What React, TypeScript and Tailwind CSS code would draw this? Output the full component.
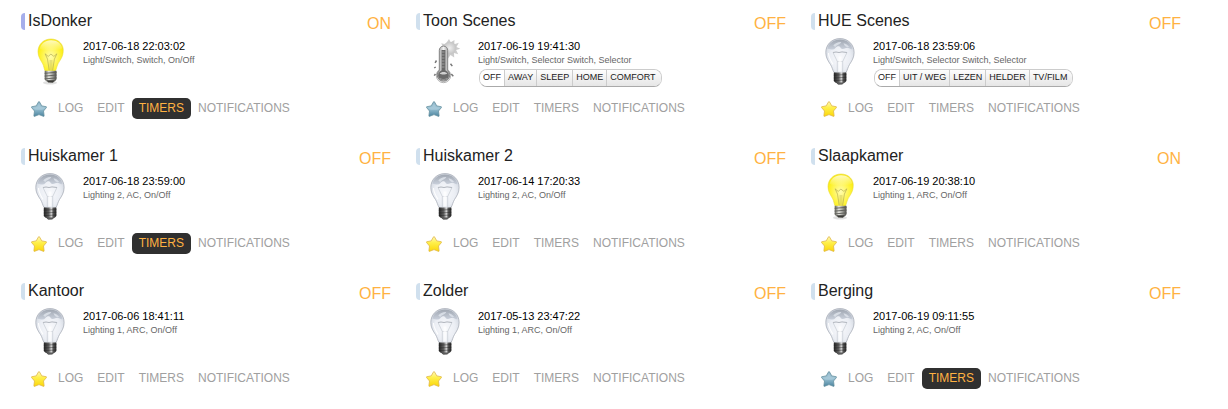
type IconKind = "on" | "off" | "thermometer";

interface Device {
  name: string;
  status: "ON" | "OFF";
  icon: IconKind;
  updated: string;
  type: string;
  favorite: boolean;
  hasTimers: boolean;
  highlighted?: boolean;
  levels?: string[];
}

const devices: Device[] = [
  { name: "IsDonker", status: "ON", icon: "on", updated: "2017-06-18 22:03:02", type: "Light/Switch, Switch, On/Off", favorite: false, hasTimers: true, highlighted: true },
  { name: "Toon Scenes", status: "OFF", icon: "thermometer", updated: "2017-06-19 19:41:30", type: "Light/Switch, Selector Switch, Selector", favorite: false, hasTimers: false, levels: ["OFF", "AWAY", "SLEEP", "HOME", "COMFORT"] },
  { name: "HUE Scenes", status: "OFF", icon: "off", updated: "2017-06-18 23:59:06", type: "Light/Switch, Selector Switch, Selector", favorite: true, hasTimers: false, levels: ["OFF", "UIT / WEG", "LEZEN", "HELDER", "TV/FILM"] },
  { name: "Huiskamer 1", status: "OFF", icon: "off", updated: "2017-06-18 23:59:00", type: "Lighting 2, AC, On/Off", favorite: true, hasTimers: true },
  { name: "Huiskamer 2", status: "OFF", icon: "off", updated: "2017-06-14 17:20:33", type: "Lighting 2, AC, On/Off", favorite: true, hasTimers: false },
  { name: "Slaapkamer", status: "ON", icon: "on", updated: "2017-06-19 20:38:10", type: "Lighting 1, ARC, On/Off", favorite: true, hasTimers: false },
  { name: "Kantoor", status: "OFF", icon: "off", updated: "2017-06-06 18:41:11", type: "Lighting 1, ARC, On/Off", favorite: true, hasTimers: false },
  { name: "Zolder", status: "OFF", icon: "off", updated: "2017-05-13 23:47:22", type: "Lighting 1, ARC, On/Off", favorite: true, hasTimers: false },
  { name: "Berging", status: "OFF", icon: "off", updated: "2017-06-19 09:11:55", type: "Lighting 2, AC, On/Off", favorite: false, hasTimers: true },
];

function IconDefs() {
  return (
    <svg className="absolute size-0" aria-hidden="true">
      <defs>
        <radialGradient id="glassOn" cx="0.5" cy="0.55" r="0.6">
          <stop offset="0" stopColor="#fffcae" />
          <stop offset="0.45" stopColor="#fff65c" />
          <stop offset="0.8" stopColor="#fdf01c" />
          <stop offset="1" stopColor="#f3df10" />
        </radialGradient>
        <linearGradient id="shineOn" x1="0" y1="0" x2="0" y2="1">
          <stop offset="0" stopColor="#fff" stopOpacity="0.75" />
          <stop offset="1" stopColor="#fff" stopOpacity="0" />
        </linearGradient>
        <linearGradient id="baseOn" x1="0" y1="0" x2="1" y2="0">
          <stop offset="0" stopColor="#5c5c54" />
          <stop offset="0.35" stopColor="#e8e8e2" />
          <stop offset="0.65" stopColor="#a0a09a" />
          <stop offset="1" stopColor="#4c4c48" />
        </linearGradient>
        <radialGradient id="glassOff" cx="0.5" cy="0.55" r="0.6">
          <stop offset="0" stopColor="#f8f9fc" />
          <stop offset="0.6" stopColor="#ebeef4" />
          <stop offset="0.88" stopColor="#d8dde5" />
          <stop offset="1" stopColor="#b4bac4" />
        </radialGradient>
        <linearGradient id="capOff" x1="0" y1="0" x2="0" y2="1">
          <stop offset="0" stopColor="#9aa1ac" />
          <stop offset="1" stopColor="#c6cdd9" />
        </linearGradient>
        <linearGradient id="baseOff" x1="0" y1="0" x2="1" y2="0">
          <stop offset="0" stopColor="#242424" />
          <stop offset="0.4" stopColor="#646464" />
          <stop offset="0.6" stopColor="#d8d8d8" />
          <stop offset="0.75" stopColor="#585858" />
          <stop offset="1" stopColor="#262626" />
        </linearGradient>
        <linearGradient id="tube" x1="0" y1="0" x2="1" y2="0">
          <stop offset="0" stopColor="#8a8a8a" />
          <stop offset="0.5" stopColor="#f2f2f2" />
          <stop offset="1" stopColor="#8a8a8a" />
        </linearGradient>
        <radialGradient id="sun">
          <stop offset="0" stopColor="#eeeeee" />
          <stop offset="1" stopColor="#c4c4c4" />
        </radialGradient>
        <linearGradient id="starGold" x1="0" y1="0" x2="0" y2="1">
          <stop offset="0" stopColor="#fff9c0" />
          <stop offset="0.4" stopColor="#fff04c" />
          <stop offset="1" stopColor="#fbd608" />
        </linearGradient>
        <linearGradient id="starBlue" x1="0" y1="0" x2="0" y2="1">
          <stop offset="0" stopColor="#8fb4c8" />
          <stop offset="0.45" stopColor="#9cc3d4" />
          <stop offset="1" stopColor="#4a839f" />
        </linearGradient>
      </defs>
    </svg>
  );
}

function BulbOn() {
  return (
    <svg viewBox="0 0 48 48" className="size-12">
      <ellipse cx="24" cy="44.8" rx="7" ry="1.8" fill="#000" opacity="0.12" />
      <path d="M25 1C17.500 1 12 6.500 12 13.600c0 5.300 2.800 8.600 4.700 12.200 1.200 2.400 1.300 4.700 2.100 6.500.4.900 1.300 1.200 2.200 1.200h6.600c1 0 1.800-.4 2.200-1.300.8-1.900 1-4 2.200-6.400 1.900-3.600 5.200-7 5.200-12.200C38 6.500 32.500 1 25 1z" fill="url(#glassOn)" stroke="#eadb3a" strokeWidth="0.6" />
      <path d="M25 2.200c-6 0-10.500 3.600-11.200 8.700 6 2.300 16.500 2.300 22.500-.4C35.500 5.600 31 2.200 25 2.200z" fill="url(#shineOn)" />
      <path d="M23.200 32.500l-1.700-11.400-2.400-5.300M26.600 32.500l1.800-11.400 2.500-5.300M19.100 15.800l3.100 2.600 2.700-2.300 3 2.300 3-2.600" fill="none" stroke="#b5ae55" strokeWidth="0.7" />
      <path d="M23.500 22h3v10.500h-3z" fill="#d0c865" opacity="0.5" />
      <path d="M18.700 32.800h11.800v8.200c0 1.100-1.600 2.500-3 3.300-.8 1.200-4.800 1.200-5.700 0-1.400-.8-3.100-2.200-3.100-3.300z" fill="url(#baseOn)" />
      <path d="M18.600 35.300l12-1M18.600 38.100l12-1M18.600 40.900l12-1" stroke="#5c5c58" strokeWidth="0.9" />
      <path d="M20.300 42.300h8.600l-2 2.300h-4.600z" fill="#3b3b38" />
    </svg>
  );
}

function BulbOff() {
  return (
    <svg viewBox="0 0 48 48" className="size-12">
      <path d="M24 .6C15.500.6 9.800 6.900 9.800 14.500c0 5.200 2.400 8.500 4.800 12.200 1.700 2.700 2.100 5.700 3.300 7.400.6.900 1.600 1.400 2.700 1.400h7c1.100 0 2-.5 2.600-1.400 1.100-1.700 1.600-4.700 3.200-7.400 2.300-3.700 4.700-7 4.700-12.200C38.100 6.900 32.500.6 24 .6z" fill="url(#glassOff)" stroke="#a9afb9" strokeWidth="0.8" />
      <path d="M24 1.500c-6.600 0-11.400 4-12.700 9.300 2.700-.2 3.900 1.500 6.600.5 1.800-.8 2.100-3.300 5-3.100 1.600.1 1.300 2.600 3.500 2.700 2.800.1 3.700-1.700 6.200-1 1.900.5 2.900 1.900 4.100 1.300C35.600 5.600 30.600 1.500 24 1.500z" fill="url(#capOff)" opacity="0.9" />
      <path d="M17.300 7.600c1.800-2.600 5-3.900 8-3.600-.8 2.500-4.500 2.700-6 5zM27.500 5.200c2.300.2 4.500 1.800 5.600 3.800-2.300.3-4.800-.6-5.600-3.800z" fill="#e0e5ec" opacity="0.8" />
      <path d="M17 14.500l3-.5 3 .5 3-.6 5 .6" fill="none" stroke="#a0a5ad" strokeWidth="0.8" />
      <path d="M17 14.500l4.300 9v10.500M31 14.500l-4.300 9v10.500M21.300 23.500h5.400" fill="none" stroke="#c6cbd3" strokeWidth="0.7" />
      <path d="M22.500 18.500h3v15h-3z" fill="#fff" opacity="0.7" />
      <path d="M12.500 15c0 4.600 2.600 8 4.500 11.400" fill="none" stroke="#fff" strokeWidth="1.2" opacity="0.9" />
      <path d="M17.800 34.500h12.600v8c0 1.100-1.500 2.200-2.600 2.600-1 2-6.200 2-7.300 0-1.100-.4-2.700-1.500-2.700-2.600z" fill="url(#baseOff)" />
      <path d="M17.700 37.200l12.700-.7M17.700 40l12.700-.7M17.700 42.700l12.700-.7" stroke="#1e1e1e" strokeWidth="0.6" opacity="0.7" />
      <path d="M20.500 44.500h7.200l-1.500 2.100h-4.100z" fill="#5a5a5a" />
    </svg>
  );
}

function Thermometer() {
  return (
    <svg viewBox="0 0 48 48" className="size-12">
      <path d="M28 1l1.700 3.200L33.500 2l-.3 4.200 4.600-1.400-2.300 4.100 3.800 1.800-4.200 1.400 2.100 4.100-4.200-1.100.2 4.300-3.700-2.500-2.500 3.600-1.500-4.400-4 1.500 1.200-4.500-4.500-1.500 4-2.100-2-4.300 4.200 1z" fill="#cccccc" />
      <circle cx="28.7" cy="10" r="6.300" fill="url(#sun)" />
      <circle cx="22.5" cy="37.5" r="7.200" fill="#ececec" stroke="#999" strokeWidth="0.7" />
      <path d="M18.300 32.200V12.300a4.200 4.200 0 0 1 8.400 0v19.900a6.300 6.300 0 1 1-8.400 0z" fill="url(#tube)" stroke="#858585" strokeWidth="1" />
      <path d="M20.500 12h4v22h-4z" fill="#686868" />
      <path d="M20.500 14h3M20.500 17h3M20.500 20h3M20.500 23h3M20.500 26h3M20.500 29h3" stroke="#b5b5b5" strokeWidth="0.7" />
      <circle cx="22.5" cy="37.3" r="5.200" fill="#6a6a6a" />
      <path d="M18.700 35.700c1.200-2.200 6.400-2.300 7.600 0-1.700 1.100-5.900 1.100-7.600 0z" fill="#d0d0d0" />
      <path d="M19 40c2 2 5 2 7 0" stroke="#999" strokeWidth="1" fill="none" />
      <path d="M15.500 22.500l-1.400 2.300M14.700 29l-1.500 1M14.500 36l-1.300 1.600M29.500 25.800l1.800 2.300M30.300 36l2 2.200" stroke="#777" strokeWidth="1.5" />
    </svg>
  );
}

function DeviceIcon({ kind }: { kind: IconKind }) {
  if (kind === "on") return <BulbOn />;
  if (kind === "off") return <BulbOff />;
  return <Thermometer />;
}

function Star({ filled }: { filled: boolean }) {
  return (
    <svg viewBox="0 0 16 16" className="size-4">
      <path
        d="M8 .6c.3 0 .5.200.6.500l2.200 3.800 4.300.8c.6.100.7.500.3.900l-2.900 3.400.6 4.700c.1.600-.3.900-.8.600L8 13.600l-4.300 1.700c-.5.300-.9 0-.8-.6l.6-4.700L.6 6.600c-.4-.4-.3-.8.3-.9l4.300-.8 2.200-3.800c.1-.3.300-.5.600-.5z"
        fill={filled ? "url(#starGold)" : "url(#starBlue)"}
        stroke={filled ? "#dfb645" : "#66909f"}
        strokeWidth="0.8"
      />
      {!filled && <path d="M8 2.200l1.800 3.700 4.200.8-2.800 2.200H4.800L2 6.700l4.200-.8z" fill="#bcd8e4" opacity="0.35" />}
    </svg>
  );
}

function LevelSelector({ name, levels }: { name: string; levels: string[] }) {
  return (
    <div
      role="group"
      aria-label={`${name} level`}
      className="mt-[3px] flex h-[18px] w-fit overflow-hidden rounded-lg border border-[#cccccc] border-b-[#aaaaaa]"
    >
      {levels.map((level, i) => (
        <button
          key={level}
          type="button"
          aria-pressed={i === 0}
          className="border-r border-[#cccccc] bg-linear-to-b from-[#fdfdfd] to-[#e6e6e6] px-[3px] pb-0.5 text-[9px] leading-[14px] text-[#222222] last:border-r-0 last:pr-[5px] aria-pressed:from-white aria-pressed:to-white"
        >
          {level}
        </button>
      ))}
    </div>
  );
}

const actionClass = "h-[21px] px-[7px] pb-0.5 text-xs text-[#a0a0a0]";
const activeActionClass = "h-[21px] rounded-[5px] bg-[#303030] px-[7px] pb-0.5 text-xs text-[#ffb242]";

function DeviceCard({ device }: { device: Device }) {
  return (
    <article>
      <header className="flex h-[26px] items-start">
        <span className={`mt-0.5 h-[17px] w-1 rounded-l-full ${device.highlighted ? "bg-[#a5aeeb]" : "bg-[#d0e0ee]"}`} />
        <h2 className="ml-[3px] grow text-base leading-5 text-[#222222]">{device.name}</h2>
        <span className="text-base leading-[26px] text-[#ffb242]">{device.status}</span>
      </header>
      <div className="mt-px flex h-[50px] pl-[5px]">
        <button type="button" aria-label={`Toggle ${device.name}`} className="size-12 shrink-0">
          <DeviceIcon kind={device.icon} />
        </button>
        <div className="ml-[9px]">
          <p className="text-[11px] leading-4 text-black">{device.updated}</p>
          <p className="text-[9px] leading-3 text-[#666666]">{device.type}</p>
          {device.levels && (
            <div className="ml-px">
              <LevelSelector name={device.name} levels={device.levels} />
            </div>
          )}
        </div>
      </div>
      <div className="mt-2.5 flex h-[21px] items-center pl-2.5">
        <button type="button" aria-label="Favorite" aria-pressed={device.favorite} className="mr-1 size-4">
          <Star filled={device.favorite} />
        </button>
        <button type="button" className={actionClass}>LOG</button>
        <button type="button" className={actionClass}>EDIT</button>
        <button type="button" className={device.hasTimers ? activeActionClass : actionClass}>TIMERS</button>
        <button type="button" className={actionClass}>NOTIFICATIONS</button>
      </div>
    </article>
  );
}

export default function App() {
  return (
    <main className="min-h-screen bg-white pt-[11px] pr-[47px] pb-3 pl-[21px] font-['Liberation_Sans',Arial,sans-serif]">
      <IconDefs />
      <div className="grid grid-cols-3 gap-x-[25px] gap-y-[27px]">
        {devices.map((device) => (
          <DeviceCard key={device.name} device={device} />
        ))}
      </div>
    </main>
  );
}
